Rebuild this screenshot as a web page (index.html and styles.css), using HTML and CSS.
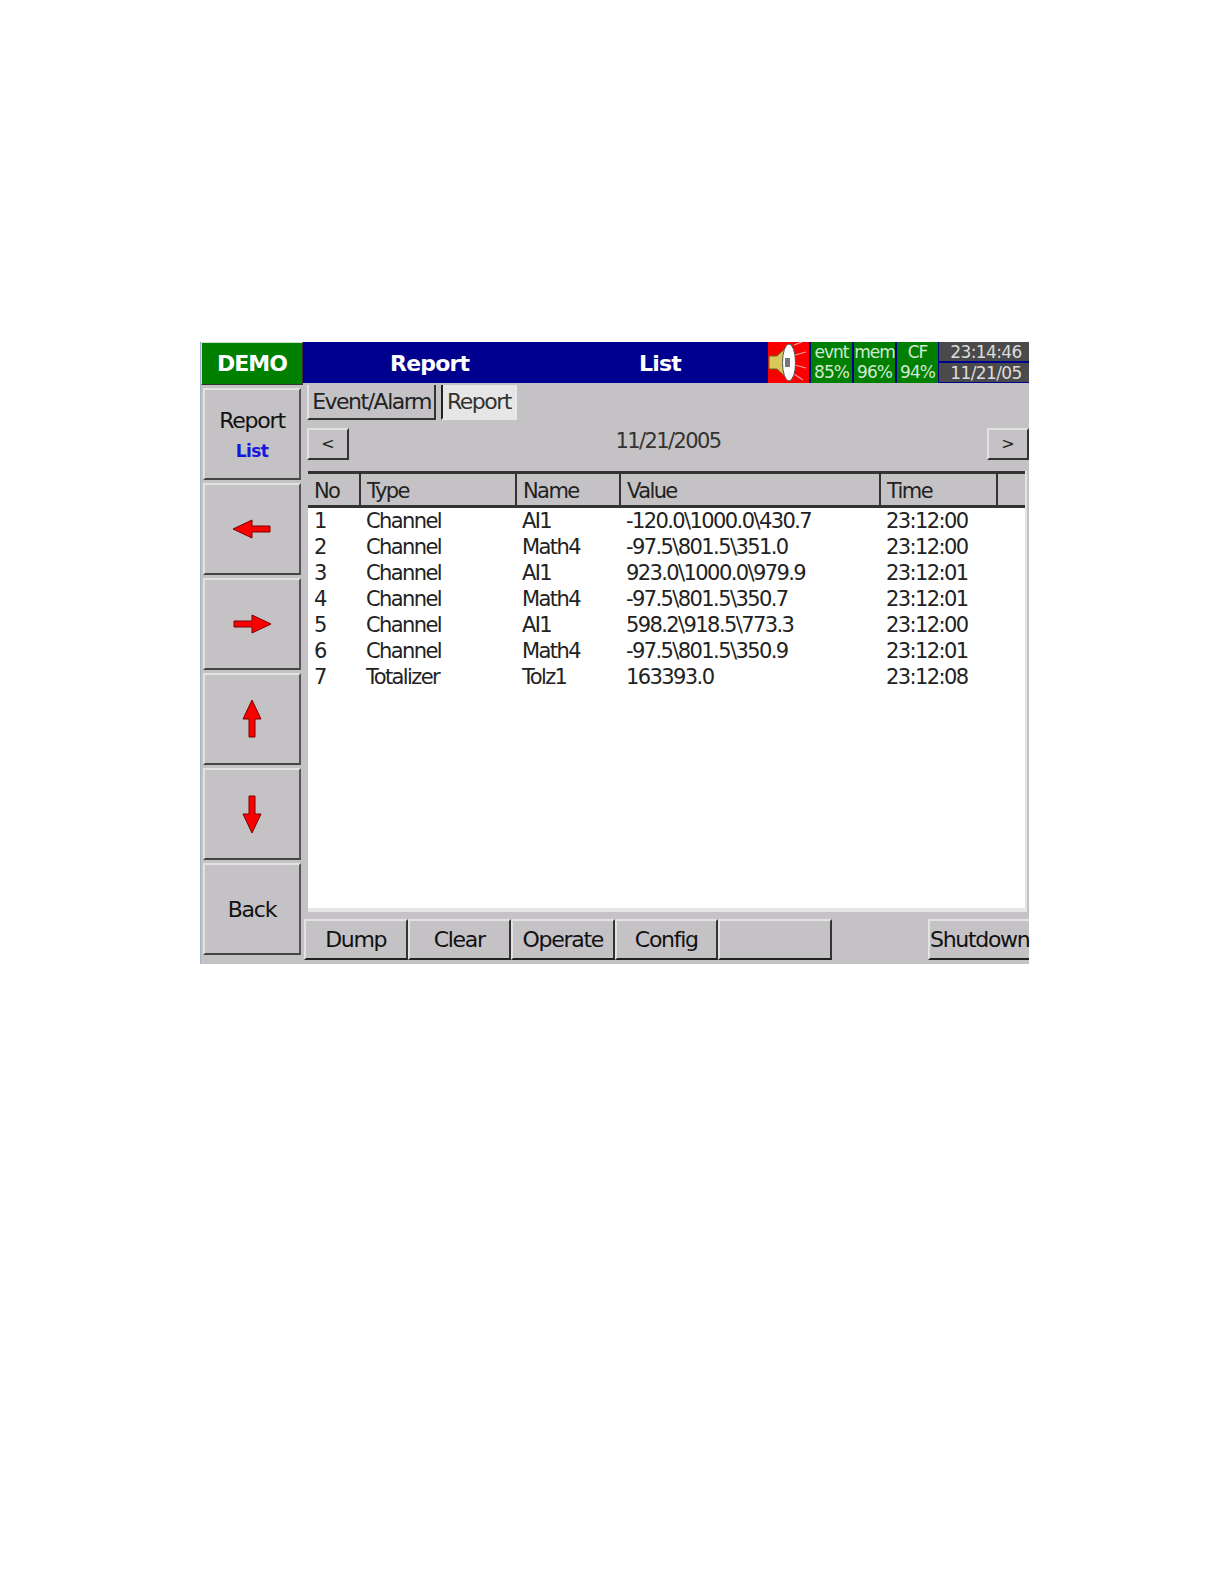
FILE: index.html
```html
<!DOCTYPE html>
<html>
<head>
<meta charset="utf-8">
<title>Report List</title>
<link rel="stylesheet" href="styles.css">
</head>
<body>
<div class="frame">
  <header class="topbar">
    <div class="demo">DEMO</div>
    <div class="titles"><span class="title-a">Report</span><span class="title-b">List</span></div>
    <div class="alarm">
      <svg width="41" height="41" viewBox="0 0 41 41">
        <rect width="41" height="41" fill="#fb0000"/>
        <path d="M26 3L34 0M27 13L38 10M27 23L38 26M26 32L35 38" stroke="#f0a0a0" stroke-width="1.2" fill="none"/>
        <path d="M1 14H9L22 2V39L9 27H1Z" fill="#d8c95a" stroke="#6b6320"/>
        <ellipse cx="21" cy="20.5" rx="6.5" ry="18.5" fill="#fff" stroke="#555"/>
        <rect x="17" y="16" width="5" height="9" fill="#777"/>
      </svg>
    </div>
    <div class="stat"><span>evnt</span><span>85%</span></div>
    <div class="stat"><span>mem</span><span>96%</span></div>
    <div class="stat"><span>CF</span><span>94%</span></div>
    <div class="clock"><span>23:14:46</span><span>11/21/05</span></div>
  </header>
  <div class="body">
    <nav class="side">
      <button class="side-btn"><span class="side-main">Report</span><span class="side-sub">List</span></button>
      <button class="side-btn"><svg width="40" height="24" viewBox="0 0 40 24"><path d="M1 12L20 3V9H38V15H20V21Z" fill="#fb0000" stroke="#7a0000"/></svg></button>
      <button class="side-btn"><svg width="40" height="24" viewBox="0 0 40 24"><path d="M39 12L20 3V9H2V15H20V21Z" fill="#fb0000" stroke="#7a0000"/></svg></button>
      <button class="side-btn"><svg width="24" height="40" viewBox="0 0 24 40"><path d="M12 1L3 20H9V38H15V20H21Z" fill="#fb0000" stroke="#7a0000"/></svg></button>
      <button class="side-btn"><svg width="24" height="40" viewBox="0 0 24 40"><path d="M12 39L3 20H9V2H15V20H21Z" fill="#fb0000" stroke="#7a0000"/></svg></button>
      <button class="side-btn"><span class="side-main">Back</span></button>
    </nav>
    <main class="content">
      <div class="tabs">
        <div class="tab">Event/Alarm</div>
        <div class="tab tab-active">Report</div>
      </div>
      <div class="datebar">
        <button class="nav-btn">&lt;</button>
        <div class="date">11/21/2005</div>
        <button class="nav-btn">&gt;</button>
      </div>
      <div class="list">
        <table>
          <colgroup>
            <col class="c-no"><col class="c-type"><col class="c-name"><col class="c-value"><col class="c-time"><col>
          </colgroup>
          <thead>
            <tr><th>No</th><th>Type</th><th>Name</th><th>Value</th><th>Time</th><th></th></tr>
          </thead>
          <tbody>
            <tr><td>1</td><td>Channel</td><td>AI1</td><td>-120.0\1000.0\430.7</td><td>23:12:00</td><td></td></tr>
            <tr><td>2</td><td>Channel</td><td>Math4</td><td>-97.5\801.5\351.0</td><td>23:12:00</td><td></td></tr>
            <tr><td>3</td><td>Channel</td><td>AI1</td><td>923.0\1000.0\979.9</td><td>23:12:01</td><td></td></tr>
            <tr><td>4</td><td>Channel</td><td>Math4</td><td>-97.5\801.5\350.7</td><td>23:12:01</td><td></td></tr>
            <tr><td>5</td><td>Channel</td><td>AI1</td><td>598.2\918.5\773.3</td><td>23:12:00</td><td></td></tr>
            <tr><td>6</td><td>Channel</td><td>Math4</td><td>-97.5\801.5\350.9</td><td>23:12:01</td><td></td></tr>
            <tr><td>7</td><td>Totalizer</td><td>Tolz1</td><td>163393.0</td><td>23:12:08</td><td></td></tr>
          </tbody>
        </table>
      </div>
      <footer class="bottom">
        <button class="foot-btn">Dump</button>
        <button class="foot-btn">Clear</button>
        <button class="foot-btn">Operate</button>
        <button class="foot-btn">Config</button>
        <button class="foot-btn foot-blank"></button>
        <button class="foot-btn foot-shut">Shutdown</button>
      </footer>
    </main>
  </div>
</div>
</body>
</html>
```
FILE: styles.css
```css
* { box-sizing: border-box; }
html, body { margin: 0; background: #fff; }
body { padding: 342px 0 0 200px; height: 1584px; font-family: "DejaVu Sans", sans-serif; }
button { font: inherit; color: inherit; padding: 0; margin: 0; }
.frame { width: 829px; height: 622px; background: #c4c2c4; display: flex; flex-direction: column; border-left: 1px solid #9fb3cc; font-size: 21px; color: #222; letter-spacing: -1.6px; }
.topbar { height: 43px; display: flex; background: #00008f; color: #fff; flex: none; }
.demo { width: 102px; background: #008000; border: 1px solid #cfe0cf; border-bottom-color: #333; border-right-color: #333; font-weight: 700; font-size: 22px; display: flex; align-items: center; justify-content: center; letter-spacing: -1px; }
.titles { width: 465px; display: flex; font-weight: 700; font-size: 22px; letter-spacing: -.8px; align-items: center; }
.title-a { margin-left: 87px; width: 249px; }
.alarm { width: 41px; height: 41px; margin-right: 2px; background: #fb0000; }
.alarm svg { display: block; }
.stat { width: 41px; margin-right: 2px; height: 41px; background: #008000; color: #d4e8d4; display: flex; flex-direction: column; align-items: center; font-size: 17px; letter-spacing: -1px; line-height: 20px; }
.topbar { background: linear-gradient(#00008f 41px, #c4c2c4 41px); }
.clock { flex: 1; margin-left: -1px; display: flex; flex-direction: column; gap: 2px; font-size: 17px; letter-spacing: -.6px; color: #ddd; }
.clock span { background: #4a4a4a; height: 19px; line-height: 20px; text-align: center; padding-left: 4px; }
.body { flex: 1; display: flex; min-height: 0; }
.side { width: 103px; flex: none; padding: 3px 0 0 2px; display: flex; flex-direction: column; gap: 3px; }
.side-btn { width: 98px; height: 92px; background: #c4c2c4; border: 2px solid; border-color: #e2e2e2 #555 #444 #e2e2e2; display: flex; flex-direction: column; align-items: center; justify-content: center; }
.side-main { font-size: 22px; color: #111; letter-spacing: -1.2px; }
.side-sub { font-size: 17px; font-weight: 700; color: #1616e0; margin-top: 8px; letter-spacing: -.6px; }
.content { flex: 1; min-width: 0; display: flex; flex-direction: column; }
.tabs { display: flex; gap: 5px; padding-left: 3px; height: 35px; margin-bottom: 8px; }
.tab { width: 129px; border: 2px solid; border-color: #c4c2c4 #333 #333 #e2e2e2; border-top: 0; display: flex; align-items: center; justify-content: center; font-size: 22px; letter-spacing: -1.5px; }
.tab-active { width: 76px; background: #e6e6e6; border-color: #e8e8e8; border-left-color: #222; color: #333; }
.datebar { display: flex; justify-content: space-between; align-items: flex-start; padding-left: 3px; height: 43px; }
.nav-btn { width: 42px; height: 32px; background: #c4c2c4; border: 2px solid; border-color: #e2e2e2 #333 #333 #e2e2e2; font-size: 16px; letter-spacing: 0; line-height: 1; }
.date { font-size: 21px; margin-top: 1px; color: #333; }
.list { margin-left: 4px; width: 719px; height: 441px; background: #fff; border-right: 2px solid #e4e4e4; border-bottom: 4px solid #e6e6e6; }
.list table { width: 717px; border-collapse: collapse; table-layout: fixed; }
.c-no { width: 52px; }
.c-type { width: 156px; }
.c-name { width: 104px; }
.c-value { width: 260px; }
.c-time { width: 117px; }
th { height: 34px; background: #c4c2c4; border: 2px solid #333; border-bottom-width: 3px; border-top-width: 3px; font-weight: 400; text-align: left; padding: 2px 0 0 6px; }
th:last-child { border-right: 0; }
th:first-child { border-left: 0; }
td { height: 26px; padding: 0 0 0 6px; white-space: nowrap; line-height: 26px; }
tbody tr:first-child td { padding-top: 0; }
.bottom { margin-top: 7px; height: 41px; display: flex; }
.foot-btn { width: 103.5px; background: #c4c2c4; border: 2px solid; border-color: #e2e2e2 #333 #222 #e2e2e2; font-size: 22px; color: #111; letter-spacing: -1.3px; }
.foot-blank { width: 114px; }
.foot-shut { width: 101px; margin-left: auto; border-right: 0; }
```
